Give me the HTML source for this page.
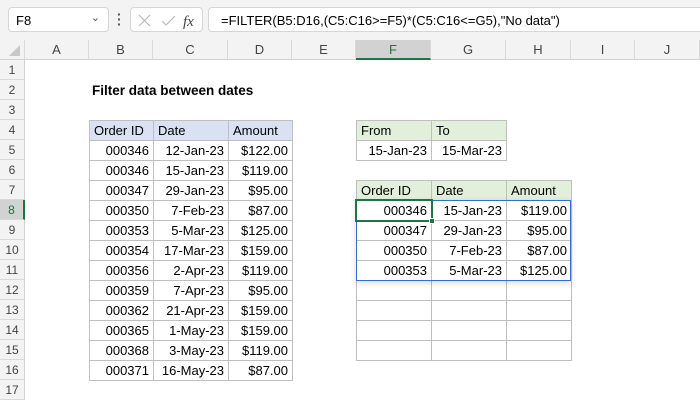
<!DOCTYPE html>
<html><head><meta charset="utf-8"><style>
*{box-sizing:border-box;margin:0;padding:0}
body{width:700px;height:400px;overflow:hidden;background:#fff;font-family:"Liberation Sans",Arial,sans-serif;font-size:13px;color:#000;position:relative}
.top{position:absolute;left:0;top:0;width:700px;height:40px;background:#f3f3f3}
.nb{position:absolute;left:8px;top:7px;width:101px;height:25px;background:#fff;border:1px solid #d6d6d6;border-radius:4px;padding:5px 0 0 7px;font-size:13px}
.fb{position:absolute;left:130px;top:7px;width:73px;height:25px;background:#fff;border:1px solid #d6d6d6;border-radius:4px}
.fx{position:absolute;left:208px;top:7px;width:500px;height:25px;background:#fff;border:1px solid #d6d6d6;border-radius:4px;padding:5px 0 0 12px;font-size:13px}
.ch{position:absolute;top:40px;height:20px;background:#f3f3f3;border-right:1px solid #d9d9d9;border-bottom:1px solid #d0d0d0;text-align:center;line-height:19px;color:#444;font-size:13px}
.rh{position:absolute;left:0;width:25px;height:20px;background:#f3f3f3;border-bottom:1px solid #d9d9d9;border-right:1px solid #d0d0d0;text-align:center;line-height:20px;color:#444;font-size:12px}
table{position:absolute;border-collapse:collapse;font-size:13px}
td{border:1px solid #bfbfbf;height:20px;padding:0 4px;white-space:nowrap;line-height:18px}
td.r{text-align:right}
.hb td{background:#d9e1f2}
.hg td{background:#e2efda}
</style></head><body>
<div class="top"></div>
<div class="nb">F8<span style="position:absolute;right:8px;top:3px;font-size:11px;color:#555">&#8964;</span></div>
<div style="position:absolute;left:117px;top:12px;width:3px;height:16px;color:#555;font-size:14px;line-height:5px;font-weight:bold">·<br>·<br>·</div>
<div class="fb"><svg width="73" height="25" style="position:absolute;left:0;top:0"><path d="M8 7l11 11M19 7L8 18" stroke="#bbb" stroke-width="1.2" fill="none"/><path d="M31 13l4 4 9-9" stroke="#bbb" stroke-width="1.2" fill="none"/><text x="52" y="18" font-family="Liberation Serif" font-style="italic" font-size="15" fill="#444">fx</text></svg></div>
<div class="fx">=FILTER(B5:D16,(C5:C16&gt;=F5)*(C5:C16&lt;=G5),"No data")</div>
<div class="ch" style="left:0;width:25px"><svg width="25" height="20" style="position:absolute;left:0;top:0"><path d="M20 16L20 5 9 16z" fill="#c8c8c8"/></svg></div>
<div class="ch" style="left:25px;width:64px">A</div>
<div class="ch" style="left:89px;width:64px">B</div>
<div class="ch" style="left:153px;width:75px">C</div>
<div class="ch" style="left:228px;width:64px">D</div>
<div class="ch" style="left:292px;width:64px">E</div>
<div class="ch" style="left:356px;width:75px;background:#d2d2d2;border-bottom:2px solid #217346;color:#217346">F</div>
<div class="ch" style="left:431px;width:75px">G</div>
<div class="ch" style="left:506px;width:65px">H</div>
<div class="ch" style="left:571px;width:64px">I</div>
<div class="ch" style="left:635px;width:65px">J</div>
<div class="rh" style="top:60px">1</div><div class="rh" style="top:80px">2</div><div class="rh" style="top:100px">3</div><div class="rh" style="top:120px">4</div><div class="rh" style="top:140px">5</div><div class="rh" style="top:160px">6</div><div class="rh" style="top:180px">7</div><div class="rh" style="top:200px;background:#d2d2d2;border-right:2px solid #217346;color:#217346">8</div><div class="rh" style="top:220px">9</div><div class="rh" style="top:240px">10</div><div class="rh" style="top:260px">11</div><div class="rh" style="top:280px">12</div><div class="rh" style="top:300px">13</div><div class="rh" style="top:320px">14</div><div class="rh" style="top:340px">15</div><div class="rh" style="top:360px">16</div><div class="rh" style="top:380px">17</div>
<div style="position:absolute;left:92px;top:83px;font-weight:bold;font-size:13.5px">Filter data between dates</div>
<table style="left:89px;top:120px">
<colgroup><col style="width:64px"><col style="width:75px"><col style="width:64px"></colgroup>
<tr class="hb"><td>Order ID</td><td>Date</td><td>Amount</td></tr>
<tr><td class="r">000346</td><td class="r">12-Jan-23</td><td class="r">$122.00</td></tr>
<tr><td class="r">000346</td><td class="r">15-Jan-23</td><td class="r">$119.00</td></tr>
<tr><td class="r">000347</td><td class="r">29-Jan-23</td><td class="r">$95.00</td></tr>
<tr><td class="r">000350</td><td class="r">7-Feb-23</td><td class="r">$87.00</td></tr>
<tr><td class="r">000353</td><td class="r">5-Mar-23</td><td class="r">$125.00</td></tr>
<tr><td class="r">000354</td><td class="r">17-Mar-23</td><td class="r">$159.00</td></tr>
<tr><td class="r">000356</td><td class="r">2-Apr-23</td><td class="r">$119.00</td></tr>
<tr><td class="r">000359</td><td class="r">7-Apr-23</td><td class="r">$95.00</td></tr>
<tr><td class="r">000362</td><td class="r">21-Apr-23</td><td class="r">$159.00</td></tr>
<tr><td class="r">000365</td><td class="r">1-May-23</td><td class="r">$159.00</td></tr>
<tr><td class="r">000368</td><td class="r">3-May-23</td><td class="r">$119.00</td></tr>
<tr><td class="r">000371</td><td class="r">16-May-23</td><td class="r">$87.00</td></tr>
</table>
<table style="left:356px;top:120px">
<colgroup><col style="width:75px"><col style="width:75px"></colgroup>
<tr class="hg"><td>From</td><td>To</td></tr>
<tr><td class="r">15-Jan-23</td><td class="r">15-Mar-23</td></tr>
</table>
<table style="left:356px;top:180px">
<colgroup><col style="width:75px"><col style="width:75px"><col style="width:65px"></colgroup>
<tr class="hg"><td>Order ID</td><td>Date</td><td>Amount</td></tr>
<tr><td class="r">000346</td><td class="r">15-Jan-23</td><td class="r">$119.00</td></tr>
<tr><td class="r">000347</td><td class="r">29-Jan-23</td><td class="r">$95.00</td></tr>
<tr><td class="r">000350</td><td class="r">7-Feb-23</td><td class="r">$87.00</td></tr>
<tr><td class="r">000353</td><td class="r">5-Mar-23</td><td class="r">$125.00</td></tr>
<tr><td></td><td></td><td></td></tr>
<tr><td></td><td></td><td></td></tr>
<tr><td></td><td></td><td></td></tr>
<tr><td></td><td></td><td></td></tr>
</table>
<div style="position:absolute;left:356px;top:200px;width:215px;height:81px;border:1px solid #2e6fd0;box-shadow:0 2px 6px rgba(0,0,0,0.15)"></div>
<div style="position:absolute;left:355px;top:199px;width:78px;height:23px;border:2px solid #217346"></div>
<div style="position:absolute;left:429px;top:218px;width:6px;height:6px;background:#217346;border:1px solid #fff"></div>
</body></html>
